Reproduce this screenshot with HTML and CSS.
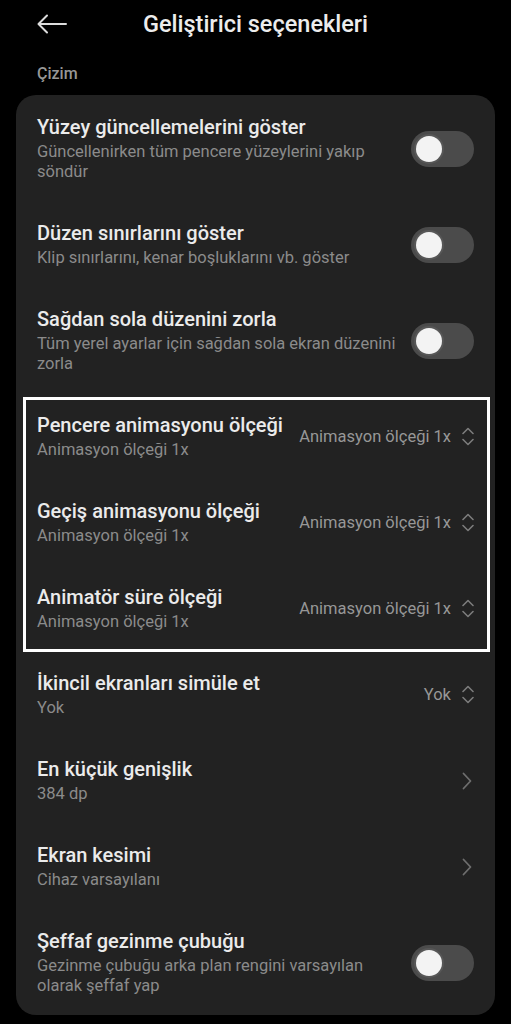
FILE: index.html
```html
<!DOCTYPE html>
<html lang="tr">
<head>
<meta charset="utf-8">
<title>Geliştirici seçenekleri</title>
<link rel="stylesheet" href="styles.css">
</head>
<body>
<header class="topbar">
  <div class="back">
    <svg width="30" height="20" viewBox="0 0 30 20"><path d="M29 10H2M10 1.5L1.5 10L10 18.5" fill="none" stroke="#dcdcdc" stroke-width="2" stroke-linecap="round" stroke-linejoin="round"/></svg>
  </div>
  <h1 class="title">Geliştirici seçenekleri</h1>
  <div></div>
</header>
<div class="section-label">Çizim</div>
<main class="card">
  <div class="row">
    <div class="text">
      <div class="t">Yüzey güncellemelerini göster</div>
      <div class="s">Güncellenirken tüm pencere yüzeylerini yakıp söndür</div>
    </div>
    <div class="toggle"><span class="knob"></span></div>
  </div>
  <div class="row">
    <div class="text">
      <div class="t">Düzen sınırlarını göster</div>
      <div class="s">Klip sınırlarını, kenar boşluklarını vb. göster</div>
    </div>
    <div class="toggle"><span class="knob"></span></div>
  </div>
  <div class="row">
    <div class="text">
      <div class="t">Sağdan sola düzenini zorla</div>
      <div class="s">Tüm yerel ayarlar için sağdan sola ekran düzenini zorla</div>
    </div>
    <div class="toggle"><span class="knob"></span></div>
  </div>
  <div class="group">
    <div class="row">
      <div class="text">
        <div class="t">Pencere animasyonu ölçeği</div>
        <div class="s">Animasyon ölçeği 1x</div>
      </div>
      <div class="value">Animasyon ölçeği 1x</div>
      <svg class="updown" width="12" height="19" viewBox="0 0 12 19"><path d="M1 6.5L6 1.5L11 6.5M1 12.5L6 17.5L11 12.5" fill="none" stroke="#7c7c7c" stroke-width="1.6" stroke-linecap="round" stroke-linejoin="round"/></svg>
    </div>
    <div class="row">
      <div class="text">
        <div class="t">Geçiş animasyonu ölçeği</div>
        <div class="s">Animasyon ölçeği 1x</div>
      </div>
      <div class="value">Animasyon ölçeği 1x</div>
      <svg class="updown" width="12" height="19" viewBox="0 0 12 19"><path d="M1 6.5L6 1.5L11 6.5M1 12.5L6 17.5L11 12.5" fill="none" stroke="#7c7c7c" stroke-width="1.6" stroke-linecap="round" stroke-linejoin="round"/></svg>
    </div>
    <div class="row">
      <div class="text">
        <div class="t">Animatör süre ölçeği</div>
        <div class="s">Animasyon ölçeği 1x</div>
      </div>
      <div class="value">Animasyon ölçeği 1x</div>
      <svg class="updown" width="12" height="19" viewBox="0 0 12 19"><path d="M1 6.5L6 1.5L11 6.5M1 12.5L6 17.5L11 12.5" fill="none" stroke="#7c7c7c" stroke-width="1.6" stroke-linecap="round" stroke-linejoin="round"/></svg>
    </div>
  </div>
  <div class="row">
    <div class="text">
      <div class="t">İkincil ekranları simüle et</div>
      <div class="s">Yok</div>
    </div>
    <div class="value">Yok</div>
    <svg class="updown" width="12" height="19" viewBox="0 0 12 19"><path d="M1 6.5L6 1.5L11 6.5M1 12.5L6 17.5L11 12.5" fill="none" stroke="#7c7c7c" stroke-width="1.6" stroke-linecap="round" stroke-linejoin="round"/></svg>
  </div>
  <div class="row">
    <div class="text">
      <div class="t">En küçük genişlik</div>
      <div class="s">384 dp</div>
    </div>
    <svg class="chev" width="10" height="18" viewBox="0 0 10 18"><path d="M1.5 1.5L8.5 9L1.5 16.5" fill="none" stroke="#6e6e6e" stroke-width="1.8" stroke-linecap="round" stroke-linejoin="round"/></svg>
  </div>
  <div class="row">
    <div class="text">
      <div class="t">Ekran kesimi</div>
      <div class="s">Cihaz varsayılanı</div>
    </div>
    <svg class="chev" width="10" height="18" viewBox="0 0 10 18"><path d="M1.5 1.5L8.5 9L1.5 16.5" fill="none" stroke="#6e6e6e" stroke-width="1.8" stroke-linecap="round" stroke-linejoin="round"/></svg>
  </div>
  <div class="row">
    <div class="text">
      <div class="t">Şeffaf gezinme çubuğu</div>
      <div class="s">Gezinme çubuğu arka plan rengini varsayılan olarak şeffaf yap</div>
    </div>
    <div class="toggle"><span class="knob"></span></div>
  </div>
</main>
</body>
</html>
```

FILE: styles.css
```css
* { box-sizing: border-box; }
html, body { margin: 0; padding: 0; }
body {
  background: #000;
  font-family: Roboto, "Noto Sans", "Liberation Sans", sans-serif;
  color: #e9e9e9;
  width: 511px;
  height: 1024px;
  overflow: hidden;
}
.topbar {
  height: 48px;
  display: grid;
  grid-template-columns: 1fr auto 1fr;
  align-items: center;
}
.back {
  padding-left: 37px;
  display: flex;
  align-items: center;
}
.title {
  margin: 0;
  font-size: 23.5px;
  font-weight: 500;
  color: #ececec;
  line-height: 28px;
}
.section-label {
  padding: 16px 0 0 37px;
  font-size: 16px;
  line-height: 20px;
  font-weight: 500;
  color: #979797;
  margin-bottom: 11px;
}
.card {
  margin: 0 16px;
  background: #222222;
  border-radius: 20px;
}
.row {
  display: flex;
  align-items: center;
  padding: 20px 21px 19px 21px;
}
.text {
  flex: 1;
  min-width: 0;
}
.t {
  font-size: 20px;
  line-height: 24px;
  font-weight: 500;
  color: #ebebeb;
  white-space: nowrap;
}
.s {
  margin-top: 3px;
  font-size: 16.5px;
  line-height: 20px;
  color: #8b8b8b;
}
.toggle {
  flex: none;
  width: 63px;
  height: 36px;
  margin-left: 10px;
  border-radius: 18px;
  background: #4b4b4b;
  display: flex;
  align-items: center;
  padding-left: 5px;
}
.knob {
  width: 26px;
  height: 26px;
  border-radius: 50%;
  background: #f3f3f3;
  box-shadow: 0 0 0 2px #575757;
}
.value {
  flex: none;
  font-size: 16.5px;
  color: #979797;
  margin-left: 8px;
}
.updown {
  flex: none;
  margin-left: 11px;
}
.chev {
  flex: none;
  margin-right: 2px;
}
.group {
  position: relative;
}
.group::after {
  content: "";
  position: absolute;
  top: 4px;
  left: 7px;
  right: 5px;
  bottom: -1px;
  border: 3px solid #ffffff;
  pointer-events: none;
}
```
